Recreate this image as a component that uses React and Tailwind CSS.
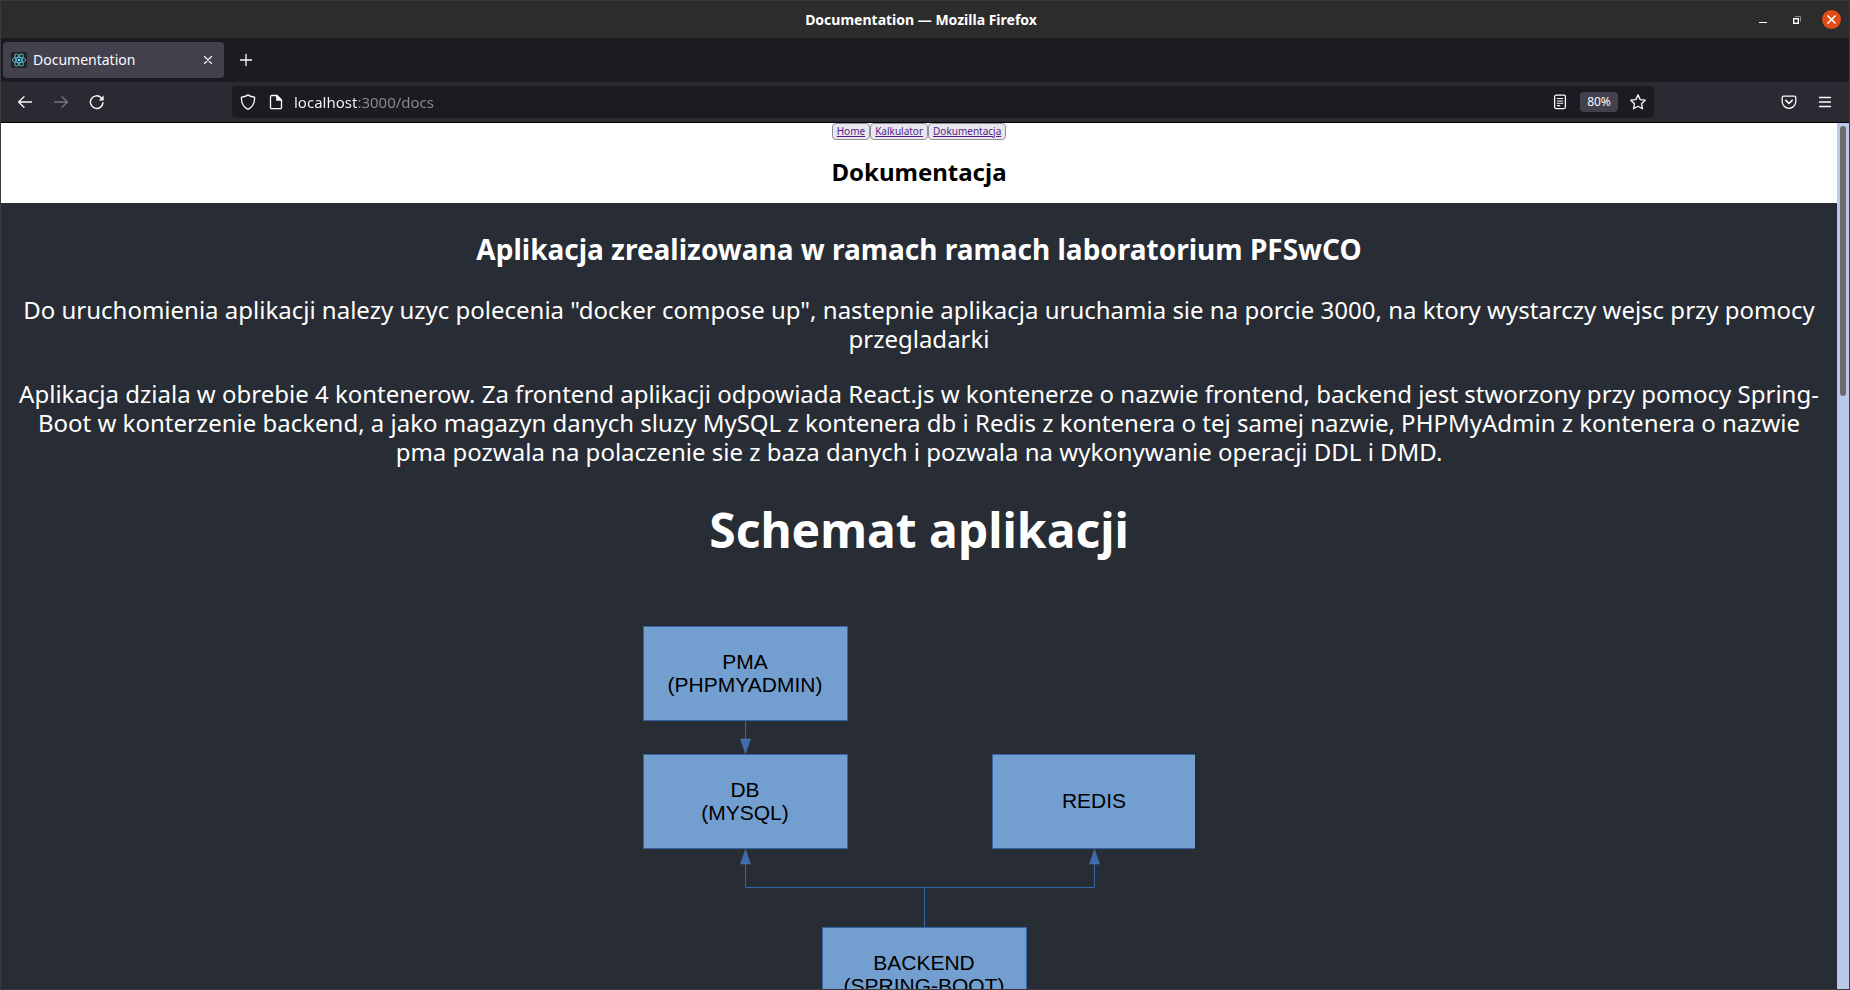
const NAV_LINKS = [
  { label: 'Home', href: '/' },
  { label: 'Kalkulator', href: '/calculator' },
  { label: 'Dokumentacja', href: '/docs' },
];

const NODES = [
  { x: 0, y: 0, lines: ['PMA', '(PHPMYADMIN)'] },
  { x: 0, y: 128, lines: ['DB', '(MYSQL)'] },
  { x: 349, y: 128, lines: ['REDIS'] },
  { x: 179, y: 301, lines: ['BACKEND', '(SPRING-BOOT)'] },
];

function ReactLogo() {
  return (
    <svg viewBox="0 0 16 16" className="size-4 shrink-0" aria-hidden="true">
      <rect width="16" height="16" rx="2" fill="#222222" />
      <g fill="none" stroke="#61dafb" strokeWidth="0.9" opacity="0.85">
        <ellipse cx="8" cy="8" rx="6.8" ry="2.6" />
        <ellipse cx="8" cy="8" rx="6.8" ry="2.6" transform="rotate(60 8 8)" />
        <ellipse cx="8" cy="8" rx="6.8" ry="2.6" transform="rotate(120 8 8)" />
      </g>
      <circle cx="8" cy="8" r="1.3" fill="#61dafb" />
    </svg>
  );
}

function Icon({ children, className = '' }) {
  return (
    <svg
      viewBox="0 0 16 16"
      className={`size-4 shrink-0 ${className}`}
      fill="none"
      stroke="currentColor"
      strokeWidth="1.3"
      strokeLinecap="round"
      strokeLinejoin="round"
      aria-hidden="true"
    >
      {children}
    </svg>
  );
}

function TitleBar() {
  return (
    <header className="flex h-[38px] shrink-0 items-center border-t border-[#383838] bg-[#2c2c2c] text-white">
      <div className="flex-1" />
      <h1 className="text-sm font-bold">Documentation — Mozilla Firefox</h1>
      <div className="flex flex-1 items-center justify-end gap-4 pr-2">
        <button aria-label="Minimize" className="flex size-[18px] items-center justify-center">
          <svg viewBox="0 0 18 18" className="size-[18px]" aria-hidden="true">
            <path d="M5 11.5h8" stroke="#fff" />
          </svg>
        </button>
        <button aria-label="Restore" className="flex size-[18px] items-center justify-center">
          <svg viewBox="0 0 18 18" className="size-[18px]" fill="none" aria-hidden="true">
            <path d="M7 5.5h5.500V11" stroke="#8a8a8a" />
            <rect x="5.700" y="7.700" width="4.600" height="4.600" stroke="#fff" strokeWidth="1.400" />
          </svg>
        </button>
        <button aria-label="Close" className="flex size-[19px] items-center justify-center rounded-full bg-[#e34b17]">
          <svg viewBox="0 0 19 19" className="size-[19px]" aria-hidden="true">
            <path d="M5.500 5.500l8 8M13.500 5.500l-8 8" stroke="#fff" strokeWidth="1.600" />
          </svg>
        </button>
      </div>
    </header>
  );
}

function TabBar() {
  return (
    <div className="flex h-11 shrink-0 items-center bg-[#1c1b22] pl-0.5 text-[#fbfbfe]">
      <div className="flex h-9 w-[221px] items-center gap-1.5 rounded bg-[#42414d] px-2">
        <ReactLogo />
        <span className="flex-1 text-sm">Documentation</span>
        <button aria-label="Close tab" className="flex size-4 items-center justify-center">
          <Icon>
            <path d="M4.500 4.500l7 7M11.500 4.500l-7 7" strokeWidth="1.100" />
          </Icon>
        </button>
      </div>
      <button aria-label="New tab" className="ml-3.5 flex size-4 items-center justify-center">
        <Icon>
          <path d="M8 2.500v11M2.500 8h11" />
        </Icon>
      </button>
    </div>
  );
}

function Toolbar() {
  return (
    <div className="flex h-[41px] shrink-0 items-center border-b border-black bg-[#2b2a33] text-[#fbfbfe]">
      <div className="flex w-[231px] shrink-0 items-center gap-5 pl-4">
        <button aria-label="Back">
          <Icon>
            <path d="M14.500 8H1.800M7 2.800L1.600 8L7 13.200" />
          </Icon>
        </button>
        <button aria-label="Forward" className="text-[#77767e]" disabled>
          <Icon>
            <path d="M1.500 8h12.700M9 2.800L14.400 8L9 13.200" />
          </Icon>
        </button>
        <button aria-label="Reload">
          <Icon>
            <path d="M14 8.600A6.300 6.300 0 1 1 12.200 3.700" strokeWidth="1.400" />
            <path d="M14.600 1.600v4.900H9.700z" fill="currentColor" stroke="none" />
          </Icon>
        </button>
      </div>
      <div className="flex h-8 flex-1 items-center rounded bg-[#1c1b22] px-2">
        <Icon>
          <path d="M8 .9C6 2.300 3.800 3 1.400 3.200C1.200 8.500 3 12.800 8 15.300C13 12.800 14.800 8.500 14.600 3.200C12.200 3 10 2.300 8 .9z" />
        </Icon>
        <Icon className="ml-3">
          <path d="M3.700 1.500h5.300l4.500 4.500v7.500a1.200 1.200 0 0 1-1.200 1.200H3.700a1.200 1.200 0 0 1-1.200-1.200V2.700a1.200 1.200 0 0 1 1.200-1.200z" />
          <path d="M8.800 1.500v4.700h4.700z" fill="currentColor" />
        </Icon>
        <input
          aria-label="Address"
          defaultValue="localhost:3000/docs"
          className="ml-2.5 min-w-0 flex-1 bg-linear-to-r from-[#fbfbfe] from-[64px] to-[#8c8b93] to-[64px] bg-clip-text text-[15px] text-transparent caret-white outline-none"
        />
        <button aria-label="Reader view">
          <Icon>
            <rect x="2.600" y="1.200" width="10.800" height="13.400" rx="1.500" />
            <path d="M5.300 4.500h5.400M5.300 7h5.400M5.300 9.300h5.400M5.300 11.600h2.600" strokeWidth="1.100" />
          </Icon>
        </button>
        <button className="ml-3 h-5 w-[38px] rounded-sm bg-[#42414d] text-xs">80%</button>
        <button aria-label="Bookmark" className="ml-3">
          <Icon>
            <path d="M8 .9l2.200 4.700 5 .6-3.700 3.500 1 5.100L8 12.300l-4.500 2.500 1-5.100L.8 6.200l5-.6z" />
          </Icon>
        </button>
      </div>
      <div className="flex w-[195px] shrink-0 items-center justify-end gap-5 pr-4">
        <button aria-label="Save to Pocket">
          <Icon>
            <path d="M2.500 2.200h11a1.300 1.300 0 0 1 1.300 1.300V7.500a6.800 6.800 0 0 1-13.600 0V3.500a1.300 1.300 0 0 1 1.300-1.300z" />
            <path d="M4.800 6.400L8 9.500l3.200-3.100" strokeWidth="1.600" />
          </Icon>
        </button>
        <button aria-label="Menu">
          <Icon>
            <path d="M2.500 3.500h11M2.500 8h11M2.500 12.500h11" />
          </Icon>
        </button>
      </div>
    </div>
  );
}

function Diagram() {
  return (
    <svg
      viewBox="0 0 552 400"
      width="552"
      height="400"
      role="img"
      aria-label="Schemat aplikacji"
      className="mx-auto block"
      fontFamily='"Liberation Sans", Arial, sans-serif'
      fontSize="21"
      textAnchor="middle"
    >
      <g stroke="#3465a4" fill="none">
        <path d="M102.500 95v20M102.500 236v25.500H451.500V236M281.500 261.500V301" />
      </g>
      <g fill="#3b6bb0" stroke="#6f87a8" strokeWidth="0.400">
        <path d="M97.500 113h10l-5 14.500z" />
        <path d="M97.500 238h10l-5-14.500z" />
        <path d="M446.500 238h10l-5-14.500z" />
      </g>
      {NODES.map(({ x, y, lines }) => (
        <g key={lines[0]}>
          <rect x={x + 0.5} y={y + 0.5} width="204" height="94" fill="#729fcf" stroke="#3465a4" />
          {lines.map((line, i) => (
            <text key={line} x={x + 102} y={y + 54 - (lines.length - 1) * 11 + i * 23} fill="#000">
              {line}
            </text>
          ))}
        </g>
      ))}
    </svg>
  );
}

function DocsPage() {
  return (
    <div className="min-w-0 flex-1 overflow-hidden bg-[#282c34] text-center text-white">
      <div className="h-20 bg-white text-black">
        <nav className="flex justify-center">
          {NAV_LINKS.map(({ label, href }) => (
            <a
              key={label}
              href={href}
              className="h-[17px] rounded border border-[#8f8f9d] bg-[#e9e9ed] px-1 text-[10px] leading-[15px] text-[#551a8b] underline"
            >
              {label}
            </a>
          ))}
        </nav>
        <h2 className="mt-4 text-2xl leading-[32px] font-bold">Dokumentacja</h2>
      </div>
      <h3 className="mt-[30px] text-[28px] leading-[32px] font-bold">
        Aplikacja zrealizowana w ramach ramach laboratorium PFSwCO
      </h3>
      <p className="mt-[30px] text-2xl leading-[29px]">
        Do uruchomienia aplikacji nalezy uzyc polecenia "docker compose up", nastepnie aplikacja
        uruchamia sie na porcie 3000, na ktory wystarczy wejsc przy pomocy przegladarki
      </p>
      <p className="mt-[26px] text-2xl leading-[29px]">
        Aplikacja dziala w obrebie 4 kontenerow. Za frontend aplikacji odpowiada React.js w
        kontenerze o nazwie frontend, backend jest stworzony przy pomocy Spring-Boot w konterzenie
        backend, a jako magazyn danych sluzy MySQL z kontenera db i Redis z kontenera o tej samej
        nazwie, PHPMyAdmin z kontenera o nazwie pma&nbsp;pozwala na polaczenie sie z baza danych i
        pozwala na wykonywanie operacji DDL i DMD.
      </p>
      <h2 className="mt-[34px] mb-[66px] text-5xl leading-[60px] font-bold">Schemat aplikacji</h2>
      <Diagram />
    </div>
  );
}

export default function App() {
  return (
    <div className="flex h-screen flex-col overflow-hidden border-x border-b border-[#3a3a3a] bg-[#282c34] font-['Noto_Sans','Open_Sans',sans-serif]">
      <TitleBar />
      <TabBar />
      <Toolbar />
      <main className="flex min-h-0 flex-1">
        <DocsPage />
        <div className="w-3 shrink-0 bg-[#b9c8e8] px-[3px] pt-[3px]">
          <div className="h-[270px] rounded-full bg-[#6b6b6b]" />
        </div>
      </main>
    </div>
  );
}
